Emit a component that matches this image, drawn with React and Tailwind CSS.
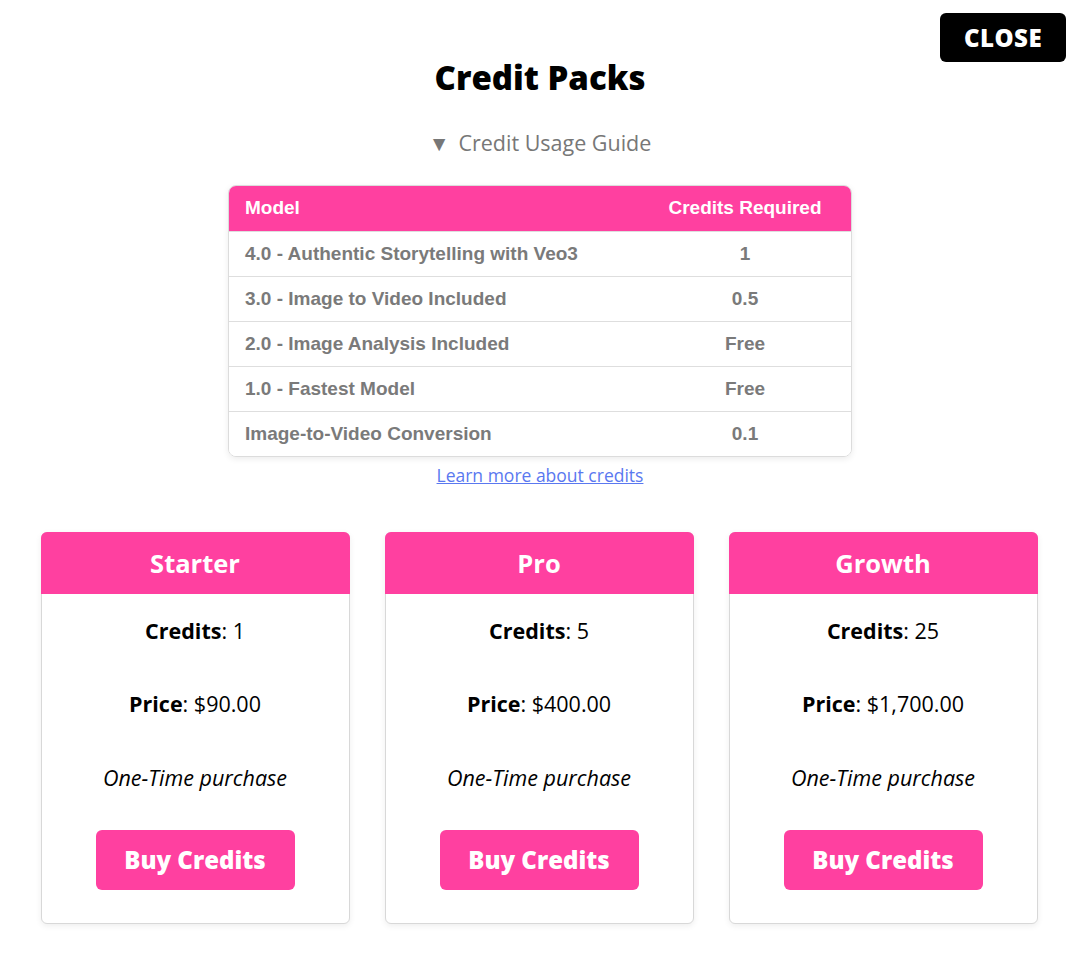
import React from 'react';

// ── Data ──────────────────────────────────────────────────────────────────────

const USAGE = [
    { model: '4.0 - Authentic Storytelling with Veo3', credits: '1' },
    { model: '3.0 - Image to Video Included', credits: '0.5' },
    { model: '2.0 - Image Analysis Included', credits: 'Free' },
    { model: '1.0 - Fastest Model', credits: 'Free' },
    { model: 'Image-to-Video Conversion', credits: '0.1' },
];

const PACKS = [
    { name: 'Starter', credits: 1, price: '$90.00' },
    { name: 'Pro', credits: 5, price: '$400.00' },
    { name: 'Growth', credits: 25, price: '$1,700.00' },
];

// ── Pieces ────────────────────────────────────────────────────────────────────

function UsageTable() {
    return (
        <div className="w-[624px] mx-auto rounded-lg border border-[#dcdcdc] overflow-hidden shadow-[0_2px_6px_rgba(0,0,0,0.08)] font-['Liberation_Sans',Arial,sans-serif] font-bold text-[19px]">
            <div className="grid grid-cols-[1fr_212px] h-[45px] items-center bg-[#ff40a0] text-white">
                <span className="pl-4">Model</span>
                <span className="text-center">Credits Required</span>
            </div>
            {USAGE.map(row => (
                <div
                    key={row.model}
                    className="grid grid-cols-[1fr_212px] h-[45px] items-center border-t border-[#dedede] text-[#7a7a7a] bg-white"
                >
                    <span className="pl-4">{row.model}</span>
                    <span className="text-center">{row.credits}</span>
                </div>
            ))}
        </div>
    );
}

function PackCard({ pack }) {
    return (
        <div className="w-[309px] h-[392px] rounded-md border border-[#d8d8d8] bg-white shadow-[0_2px_6px_rgba(0,0,0,0.07)] flex flex-col items-center">
            <div className="w-[calc(100%+2px)] -mx-px -mt-px h-[62px] rounded-t-md bg-[#ff40a0] flex items-center justify-center text-white text-[25.5px] font-bold">
                {pack.name}
            </div>
            <p className="mt-[23px] text-[21.5px] text-black leading-[28px]">
                <b>Credits</b>: {pack.credits}
            </p>
            <p className="mt-[45px] text-[21.5px] text-black leading-[28px]">
                <b>Price</b>: {pack.price}
            </p>
            <p className="mt-[46px] text-[21.5px] italic text-black leading-[28px]">
                One-Time purchase
            </p>
            <button className="mt-[38px] w-[199px] h-[60px] rounded-md bg-[#ff40a0] text-white text-[24px] font-extrabold">
                Buy Credits
            </button>
        </div>
    );
}

// ── Root ──────────────────────────────────────────────────────────────────────

export default function App() {
    return (
        <div className="relative w-[1080px] min-h-[962px] bg-white font-['Open_Sans',sans-serif]">
            <button className="absolute top-[13px] left-[940px] w-[126px] h-[49px] rounded-md bg-black text-white text-[24px] font-extrabold tracking-[0.5px]">
                CLOSE
            </button>

            <div className="flex flex-col items-center pt-[54px]">
                <h1 className="text-[33px] font-extrabold text-black leading-[48px]">Credit Packs</h1>

                <div className="mt-[26px] flex items-center gap-[9px] text-[21.5px] text-[#777] leading-[30px]">
                    <span className="text-[21px]">▼</span>
                    <span>Credit Usage Guide</span>
                </div>

                <div className="mt-[27px]">
                    <UsageTable />
                </div>

                <a href="#" className="mt-[6px] text-[17.5px] text-[#5a78f0] underline leading-[24px]">
                    Learn more about credits
                </a>

                <div className="mt-[45px] flex gap-[35px] -translate-x-px">
                    {PACKS.map(p => (
                        <PackCard key={p.name} pack={p} />
                    ))}
                </div>
            </div>
        </div>
    );
}
